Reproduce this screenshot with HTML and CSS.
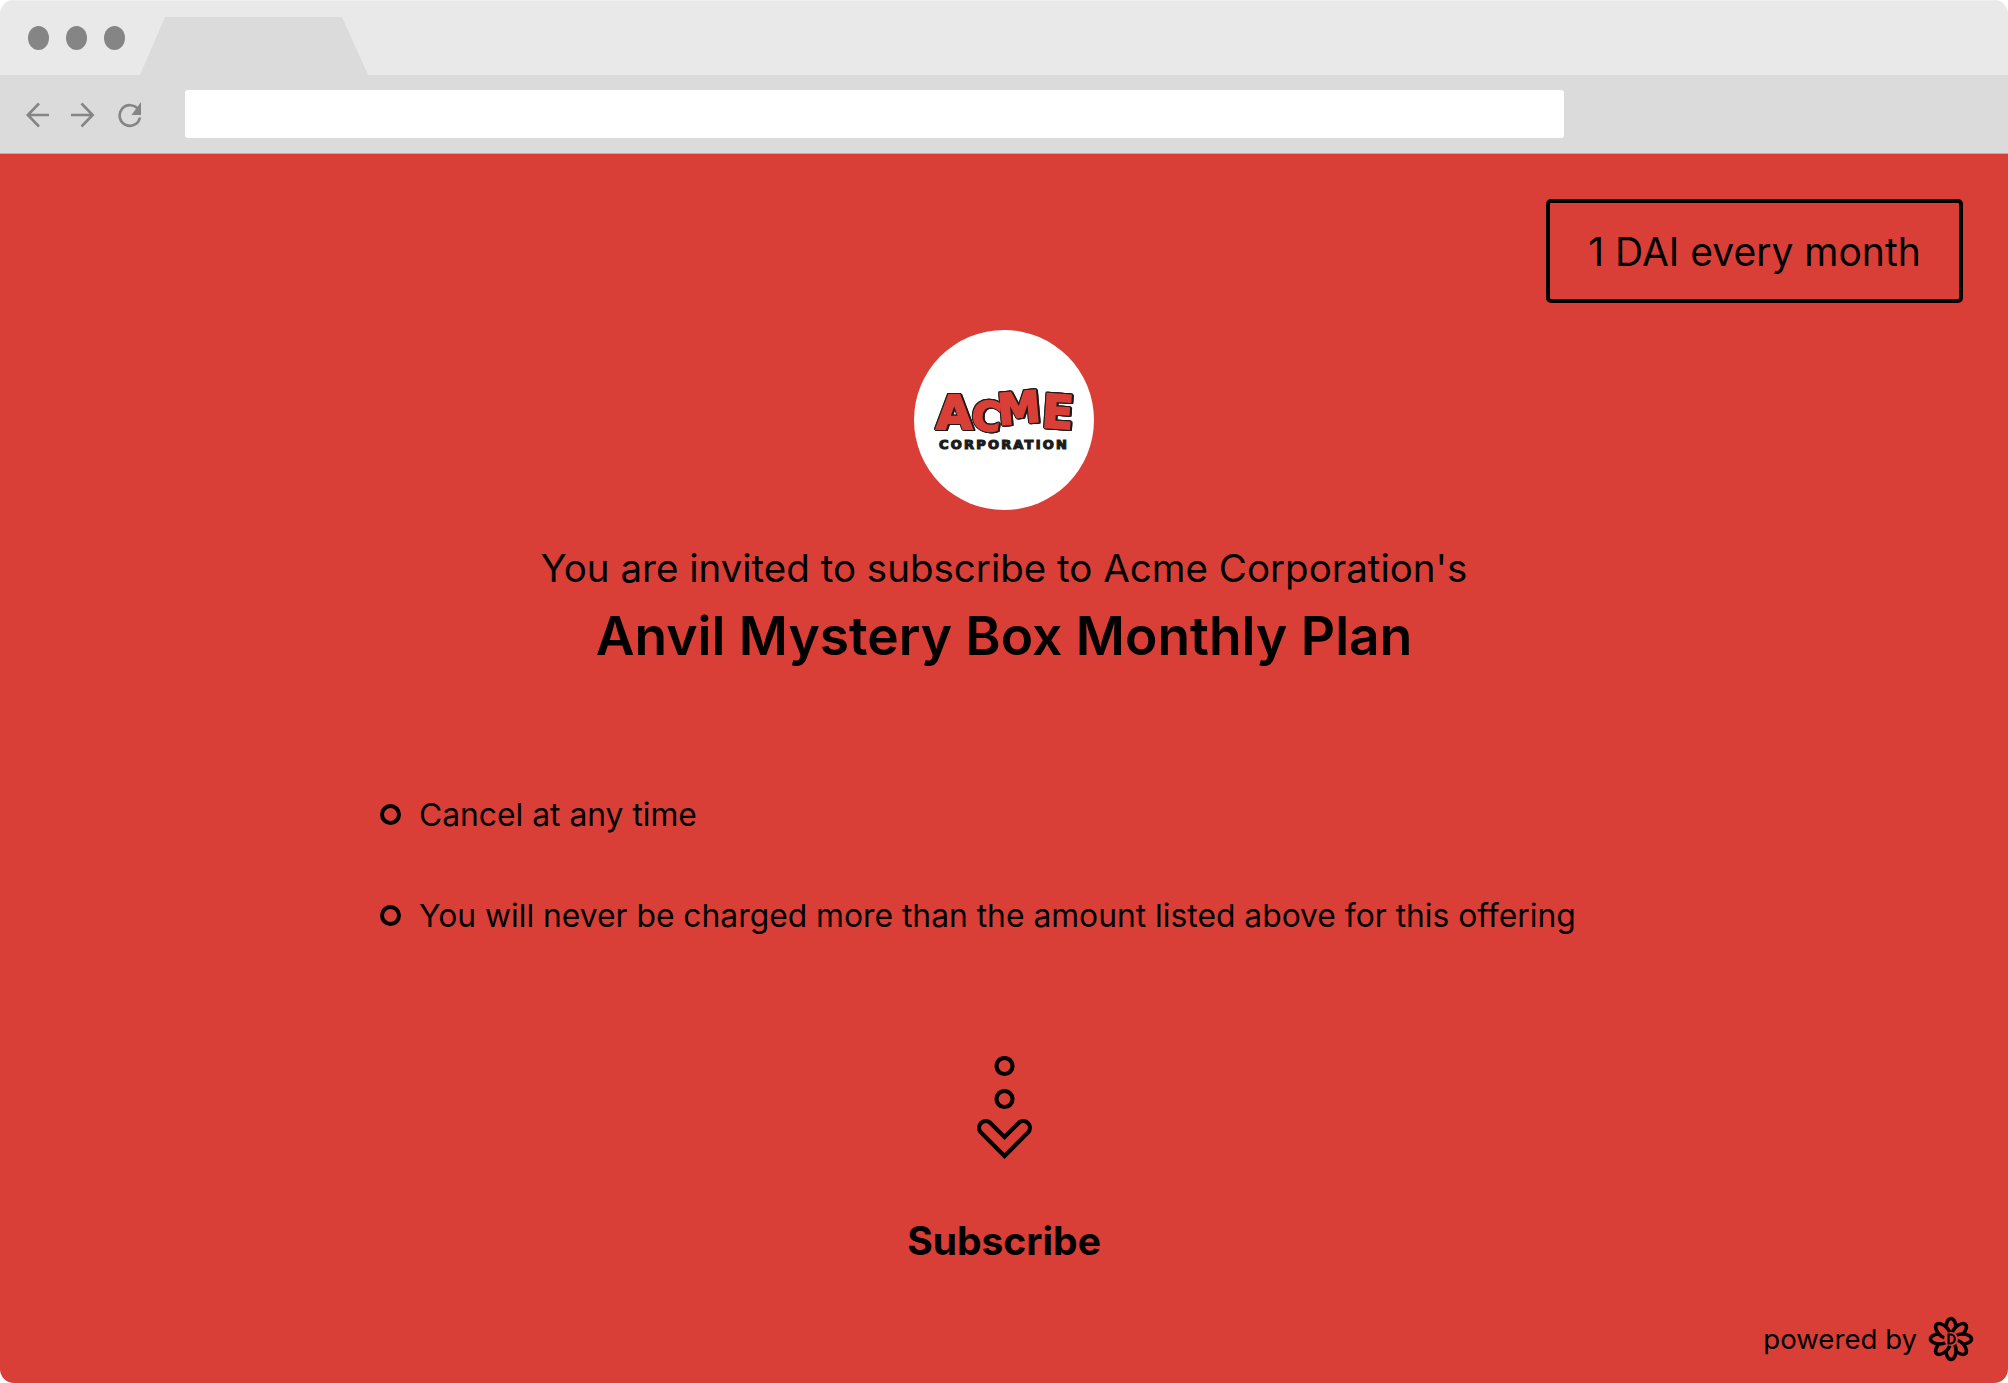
FILE: index.html
```html
<!DOCTYPE html>
<html lang="en">
<head>
<meta charset="utf-8">
<title>Anvil Mystery Box Monthly Plan</title>
<link rel="stylesheet" href="styles.css">
</head>
<body>
<div class="window">
  <header class="chrome">
    <div class="tabbar">
      <div class="dots"><span class="dot"></span><span class="dot"></span><span class="dot"></span></div>
      <div class="tab"></div>
    </div>
    <div class="toolbar">
      <div class="navs">
        <svg class="nav" width="25" height="26" viewBox="0 0 25 26" fill="none" stroke="#858585" stroke-width="2.6"><path d="M23 13H2M13 1.5 1.8 13 13 24.5"/></svg>
        <svg class="nav" width="25" height="26" viewBox="0 0 25 26" fill="none" stroke="#858585" stroke-width="2.6"><path d="M0 13H21M10.5 1.5 21.7 13 10.5 24.5"/></svg>
        <svg class="nav" width="26" height="26" viewBox="0 0 26 26" fill="none"><path d="M22.3 7.5A10.3 10.3 0 1 0 24 15.5" stroke="#858585" stroke-width="2.6"/><path d="M25 0V13H15.5Z" fill="#858585"/></svg>
      </div>
      <div class="address"></div>
    </div>
  </header>
  <main class="page">
    <div class="price">1 DAI every month</div>
    <div class="logo">
      <svg class="logo-art" width="150" height="80" viewBox="0 0 150 80">
        <g class="acme">
          <text x="7" y="49" font-size="47">A</text>
          <text transform="translate(41 48) rotate(8)" font-size="40">C</text>
          <text transform="translate(70 45) rotate(-5)" font-size="43">M</text>
          <text transform="translate(112 47) rotate(4)" font-size="46">E</text>
        </g>
        <text class="corp" x="75" y="69" text-anchor="middle">CORPORATION</text>
      </svg>
    </div>
    <p class="invite">You are invited to subscribe to Acme Corporation's</p>
    <h1 class="plan">Anvil Mystery Box Monthly Plan</h1>
    <ul class="points">
      <li class="point">Cancel at any time</li>
      <li class="point">You will never be charged more than the amount listed above for this offering</li>
    </ul>
    <svg class="arrow" width="60" height="104" viewBox="0 0 60 104" fill="none" stroke="#000" stroke-width="4.2">
      <circle cx="30.5" cy="10" r="8"/>
      <circle cx="30.5" cy="43" r="8"/>
      <path d="M30.5 81 15.9 66.5A6.7 6.7 0 0 0 6.5 75.9L30.5 100 54.5 75.9A6.7 6.7 0 0 0 45.1 66.5Z"/>
    </svg>
    <button class="subscribe">Subscribe</button>
    <footer class="powered">
      <span>powered by</span>
      <svg width="46" height="46" viewBox="0 0 46 46" fill="#d93f37" stroke="#000" stroke-width="3.6">
        <ellipse cx="23" cy="11.5" rx="5" ry="9"/>
        <ellipse cx="23" cy="11.5" rx="5" ry="9" transform="rotate(45 23 23)"/>
        <ellipse cx="23" cy="11.5" rx="5" ry="9" transform="rotate(90 23 23)"/>
        <ellipse cx="23" cy="11.5" rx="5" ry="9" transform="rotate(135 23 23)"/>
        <ellipse cx="23" cy="11.5" rx="5" ry="9" transform="rotate(180 23 23)"/>
        <ellipse cx="23" cy="11.5" rx="5" ry="9" transform="rotate(225 23 23)"/>
        <ellipse cx="23" cy="11.5" rx="5" ry="9" transform="rotate(270 23 23)"/>
        <ellipse cx="23" cy="11.5" rx="5" ry="9" transform="rotate(315 23 23)"/>
        <circle cx="23" cy="23" r="7" stroke="none"/>
        <path d="M20.6 18.5V27.5H22.6C28.2 27.5 28.2 18.5 22.6 18.5Z" fill="none" stroke-width="2.2"/>
      </svg>
    </footer>
  </main>
</div>
</body>
</html>
```

FILE: styles.css
```css
* { box-sizing: border-box; }
html, body { margin: 0; padding: 0; height: 100%; background: #fff; overflow: hidden; }
.window {
  width: 2008px;
  height: 1383px;
  border-radius: 14px;
  overflow: hidden;
  display: flex;
  flex-direction: column;
  font-family: Inter, "Liberation Sans", sans-serif;
  color: #000;
}
.chrome { flex: none; }
.tabbar {
  height: 75px;
  background: #e9e9e9;
  display: flex;
  align-items: flex-start;
  padding-left: 28px;
  border-top: 1px solid #f0f0f0;
}
.dots { display: flex; gap: 17px; margin-top: 25px; }
.dot { width: 21px; height: 24px; border-radius: 50%; background: #858585; }
.tab {
  width: 228px;
  height: 58px;
  margin-left: 15px;
  margin-top: 16px;
  background: #dbdbdb;
  clip-path: polygon(0 100%, 25px 0, 202px 0, 100% 100%);
}
.toolbar {
  height: 79px;
  background: #dbdbdb;
  display: flex;
  align-items: flex-start;
  padding: 15px 0 0 26px;
  border-bottom: 1px solid #b9b0ae;
}
.navs { display: flex; gap: 20px; margin-top: 12px; width: 159px; }
.nav { display: block; flex: none; }
.address { width: 1379px; height: 48px; background: #fff; border-radius: 3px; }
.page {
  flex: 1;
  background: #d93f37;
  display: flex;
  flex-direction: column;
  align-items: center;
  padding-top: 45px;
}
.price {
  align-self: flex-end;
  margin-right: 45px;
  width: 417px;
  height: 104px;
  border: 4px solid #000;
  border-radius: 5px;
  display: flex;
  align-items: center;
  justify-content: center;
  font-size: 39px;
}
.logo {
  width: 180px;
  height: 180px;
  margin-top: 27px;
  border-radius: 50%;
  background: #fff;
  display: flex;
  align-items: center;
  justify-content: center;
}
.logo-art { display: block; }
.acme {
  filter: drop-shadow(1px 0 0 #1c1c1c) drop-shadow(-1px 0 0 #1c1c1c) drop-shadow(0 -1px 0 #1c1c1c) drop-shadow(1.5px 1.5px 0 #1c1c1c);
}
.acme text {
  font-family: "DejaVu Sans", sans-serif;
  font-weight: 700;
  fill: #d93f37;
  stroke: #d93f37;
  stroke-width: 2px;
}
.corp {
  font-family: "DejaVu Sans", sans-serif;
  font-weight: 700;
  font-size: 13px;
  letter-spacing: 2.2px;
  fill: #1c1c1c;
  stroke: #1c1c1c;
  stroke-width: 1.2px;
}
.invite { margin: 36px 0 0; font-size: 38.5px; line-height: 44px; }
.plan { margin: 14px 0 0; font-size: 53.3px; line-height: 64px; font-weight: 600; }
.points {
  list-style: none;
  margin: 129px 0 0;
  padding: 0 0 0 380px;
  align-self: stretch;
  display: flex;
  flex-direction: column;
  gap: 66px;
}
.point {
  display: flex;
  align-items: center;
  gap: 18px;
  font-size: 31.8px;
  line-height: 35px;
}
.point::before {
  content: "";
  box-sizing: border-box;
  width: 21px;
  height: 21px;
  border: 4.5px solid #000;
  border-radius: 50%;
  flex: none;
}
.arrow { display: block; margin-top: 123px; }
.subscribe {
  margin-top: 58px;
  padding: 0;
  border: 0;
  background: none;
  color: #000;
  font: 700 39px/46px Inter, "Liberation Sans", sans-serif;
}
.powered {
  align-self: flex-end;
  display: flex;
  align-items: center;
  gap: 11px;
  margin: 52px 34px 0 0;
  font-size: 27.6px;
}
```
